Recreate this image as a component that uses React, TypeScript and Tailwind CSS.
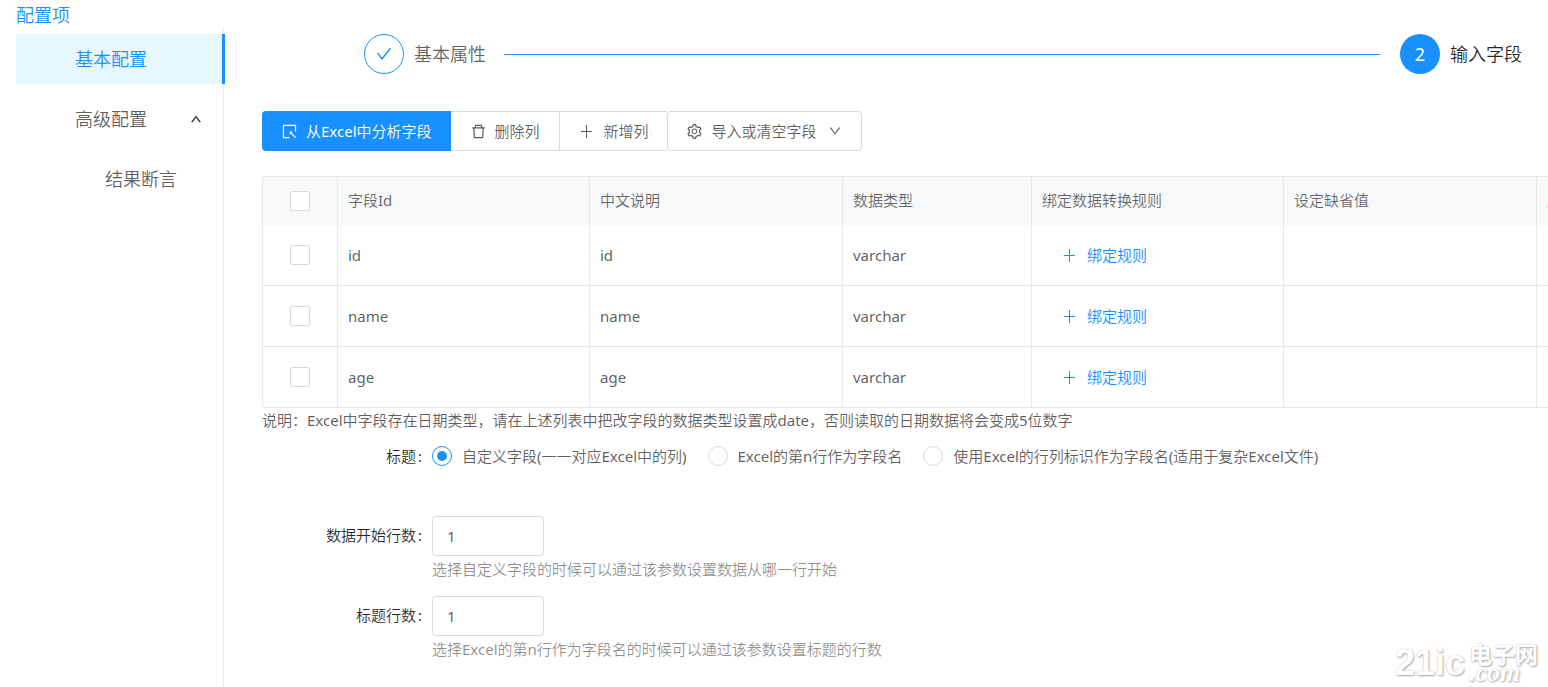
import { useState } from 'react';
import {
  AiOutlineCheck,
  AiOutlineDelete,
  AiOutlineDown,
  AiOutlineSelect,
  AiOutlineSetting,
  AiOutlineUp,
} from 'react-icons/ai';

interface Field {
  id: string;
  label: string;
  type: string;
}

const FIELDS: Field[] = [
  { id: 'id', label: 'id', type: 'varchar' },
  { id: 'name', label: 'name', type: 'varchar' },
  { id: 'age', label: 'age', type: 'varchar' },
];

const COLUMNS = ['字段Id', '中文说明', '数据类型', '绑定数据转换规则', '设定缺省值', '脱敏'];

const TITLE_MODES = [
  '自定义字段(一一对应Excel中的列)',
  'Excel的第n行作为字段名',
  '使用Excel的行列标识作为字段名(适用于复杂Excel文件)',
];

// Thin plus, one pixel strokes
function PlusIcon() {
  return (
    <svg viewBox="0 0 15 15" className="size-[15px] fill-current" shapeRendering="crispEdges" aria-hidden="true">
      <rect x="2" y="7" width="11" height="1" />
      <rect x="7" y="1" width="1" height="13" />
    </svg>
  );
}

function Sidebar() {
  return (
    <aside className="w-[208px] shrink-0 border-r border-[#e8e8e8] pt-[5px] text-lg">
      <nav className="flex flex-col gap-[10px]">
        <a
          href="#basic"
          className="-mr-[2px] flex h-[50px] items-center border-r-[3px] border-[#1890ff] bg-[#e6f7ff] pl-[59px] text-[#1890ff]"
        >
          基本配置
        </a>
        <button className="flex h-[50px] items-center justify-between pl-[59px] pr-[21px]">
          高级配置
          <AiOutlineUp className="size-3 stroke-[60]" />
        </button>
        <a href="#assert" className="flex h-[50px] items-center pl-[89px]">
          结果断言
        </a>
      </nav>
    </aside>
  );
}

function Steps() {
  return (
    <ol className="flex items-center pl-[102px] pr-[26px] text-lg">
      <li className="flex flex-1 items-center">
        <span className="mr-[10px] flex size-10 items-center justify-center rounded-full border border-[#1890ff] text-[#1890ff]">
          <AiOutlineCheck className="size-[18px]" />
        </span>
        基本属性
        <span className="ml-[18px] mr-5 h-px flex-1 bg-[#1890ff]" />
      </li>
      <li className="flex items-center text-black/85">
        <span className="mr-[10px] flex size-10 items-center justify-center rounded-full bg-[#1890ff] text-white">
          2
        </span>
        输入字段
      </li>
    </ol>
  );
}

function Toolbar() {
  return (
    <div className="mt-[37px] flex h-10">
      <button className="flex items-center gap-2 rounded-l bg-[#1890ff] px-[19px] text-white">
        <AiOutlineSelect className="size-[17px]" />
        从Excel中分析字段
      </button>
      <button className="flex items-center gap-2 border-y border-r border-[#d9d9d9] px-[19px]">
        <AiOutlineDelete className="size-[17px]" />
        删除列
      </button>
      <button className="flex items-center gap-[10px] border-y border-[#d9d9d9] pl-[19px] pr-[18px]">
        <PlusIcon />
        新增列
      </button>
      <button className="flex items-center gap-[9px] rounded border border-[#d9d9d9] pl-[18px] pr-[19px]">
        <AiOutlineSetting className="size-[17px]" />
        导入或清空字段
        <AiOutlineDown className="ml-[2px] size-[14px]" />
      </button>
    </div>
  );
}

function Checkbox({ label }: { label: string }) {
  return (
    <input
      type="checkbox"
      aria-label={label}
      className="mx-auto block size-5 appearance-none rounded-xs border border-[#d9d9d9] bg-white checked:bg-[#1890ff]"
    />
  );
}

function FieldTable() {
  return (
    <div className="mt-[25px] overflow-hidden rounded-l border-y border-l border-[#e8e8e8]">
      <table className="w-[1500px] table-fixed border-separate border-spacing-0 text-left">
        <colgroup>
          <col className="w-[75px]" />
          <col className="w-[252px]" />
          <col className="w-[253px]" />
          <col className="w-[189px]" />
          <col className="w-[252px]" />
          <col className="w-[253px]" />
          <col />
        </colgroup>
        <thead className="bg-[#f7f8fa] text-black/60">
          <tr className="h-12">
            <th className="border-r border-[#e8e8e8] p-0">
              <Checkbox label="全选" />
            </th>
            {COLUMNS.map((name) => (
              <th key={name} className="border-r border-[#e8e8e8] px-[10px] pb-[2px] pt-0 font-normal">
                {name}
              </th>
            ))}
          </tr>
        </thead>
        <tbody className="[&_td]:border-b [&_td]:border-r [&_td]:border-[#e8e8e8] [&_tr:last-child>td]:border-b-0">
          {FIELDS.map((field) => (
            <tr key={field.id} className="h-[61px] last:h-[60px]">
              <td>
                <Checkbox label={field.id} />
              </td>
              <td className="px-[10px]">{field.id}</td>
              <td className="px-[10px]">{field.label}</td>
              <td className="px-[10px]">{field.type}</td>
              <td className="px-[30px]">
                <button className="flex items-center gap-[10px] text-[#1890ff]">
                  <PlusIcon />
                  绑定规则
                </button>
              </td>
              <td />
              <td />
            </tr>
          ))}
        </tbody>
      </table>
    </div>
  );
}

interface RowInputProps {
  id: string;
  label: string;
  help: string;
}

function RowInput({ id, label, help }: RowInputProps) {
  return (
    <div className="flex">
      <label htmlFor={id} className="w-[162px] shrink-0 pt-[7px] text-right text-black/85">
        {label}
        <span className="mx-[2px]">:</span>
      </label>
      <div className="ml-2">
        <input
          id={id}
          defaultValue="1"
          className="block h-10 w-28 rounded border border-[#d9d9d9] px-[14px] outline-none"
        />
        <p className="pb-[15px] pt-px text-black/45">{help}</p>
      </div>
    </div>
  );
}

function Watermark() {
  return (
    <div className="pointer-events-none absolute bottom-1 right-[10px] flex items-center gap-1 font-bold text-white [text-shadow:1px_1px_2px_#aaa,0_0_1px_#bbb]">
      <span className="font-['Liberation_Sans_Narrow','Liberation_Sans',sans-serif] text-[36px] leading-9">21ic</span>
      <span className="flex flex-col">
        <span className="font-['Noto_Sans_CJK_SC',sans-serif] text-[23px] leading-5">电子网</span>
        <span className="font-['Liberation_Serif',serif] text-[26px] italic leading-5">.com</span>
      </span>
    </div>
  );
}

export default function App() {
  const [mode, setMode] = useState(0);

  return (
    <div className="relative flex min-h-screen flex-col overflow-hidden bg-white pl-4 font-['Noto_Sans','Noto_Sans_CJK_SC_DemiLight','Noto_Sans_CJK_SC_Light','Noto_Sans_CJK_SC',sans-serif] text-[15px] leading-6 text-black/65">
      <h1 className="pt-[2px] text-lg leading-[27px] text-[#1890ff]">配置项</h1>
      <div className="flex flex-1">
        <Sidebar />
        <main className="min-w-0 flex-1 pl-[38px] pt-[5px]">
          <Steps />
          <Toolbar />
          <FieldTable />
          <p>说明：Excel中字段存在日期类型，请在上述列表中把改字段的数据类型设置成date，否则读取的日期数据将会变成5位数字</p>
          <form className="pt-3">
            <fieldset className="flex items-center pb-12">
              <legend className="float-left w-[162px] text-right text-black/85">
                标题<span className="mx-[2px]">:</span>
              </legend>
              <div className="ml-2 flex items-center gap-[21px]">
                {TITLE_MODES.map((name, i) => (
                  <label key={name} className="flex items-center gap-[10px]">
                    <input
                      type="radio"
                      name="titleMode"
                      checked={mode === i}
                      onChange={() => setMode(i)}
                      className="size-5 appearance-none rounded-full border border-[#d9d9d9] bg-white bg-clip-content p-1 checked:border-[#1890ff] checked:bg-[#1890ff]"
                    />
                    {name}
                  </label>
                ))}
              </div>
            </fieldset>
            <RowInput id="startRow" label="数据开始行数" help="选择自定义字段的时候可以通过该参数设置数据从哪一行开始" />
            <RowInput id="titleRow" label="标题行数" help="选择Excel的第n行作为字段名的时候可以通过该参数设置标题的行数" />
          </form>
        </main>
      </div>
      <Watermark />
    </div>
  );
}
